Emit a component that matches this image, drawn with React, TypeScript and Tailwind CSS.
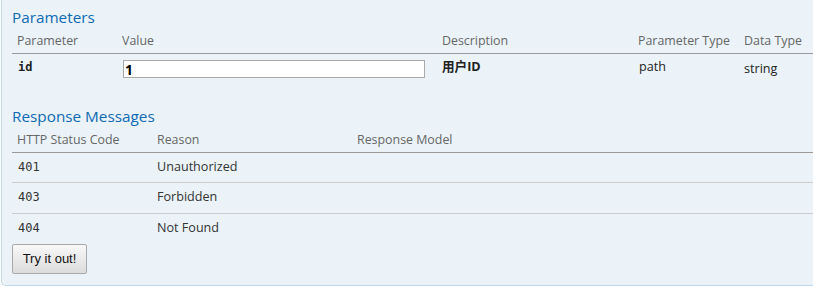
import React from 'react';

const sans = "font-['Open_Sans','Noto_Sans_CJK_SC',sans-serif]";
const mono = "font-['DejaVu_Sans_Mono',monospace]";

const responses = [
  { code: '401', reason: 'Unauthorized', h: 'h-[30px]' },
  { code: '403', reason: 'Forbidden', h: 'h-[31px]' },
  { code: '404', reason: 'Not Found', h: 'h-[30px]' }
];

export default function App() {
  return <div className={`w-[813px] h-[288px] overflow-hidden bg-white ${sans}`}>
      <div className="ml-px w-[840px] bg-[#ebf3f9] border-l border-b border-[#c3d9ec] rounded-bl-[5px] pl-[10px] pb-[11px]">
        <h4 className="pt-[5px] h-[29px] text-[15.3px] leading-[24px] text-[#0f6ab4]">
          Parameters
        </h4>
        <div className="grid grid-cols-[105px_320px_196px_106px_1fr] text-[12.4px] leading-[18px] text-[#666] border-b border-[#999]">
          <div className="pl-[5px] pt-[3px] pb-[3px]">Parameter</div>
          <div className="pl-[5px] pt-[3px]">Value</div>
          <div className="pl-[5px] pt-[3px]">Description</div>
          <div className="pl-[5px] pt-[3px]">Parameter Type</div>
          <div className="pl-[5px] pt-[3px]">Data Type</div>
        </div>
        <div className="grid grid-cols-[105px_320px_196px_106px_1fr] items-start pt-[6px] h-[30px] text-[12.6px] leading-[14px] text-[#222]">
          <div className={`pl-[6px] text-[12px] font-bold ${mono}`}>id</div>
          <div className="pl-[6px]">
            <input readOnly value="1" className="block w-[302px] h-[18px] border border-[#aaa] bg-white px-[1px] text-[14px] font-bold text-black outline-none" />
          </div>
          <div className="pl-[5px] font-bold">用户ID</div>
          <div className="pl-[6px]">path</div>
          <div className="pl-[5px] pt-[2px]">string</div>
        </div>
        <h4 className="mt-[20px] h-[24px] text-[15.3px] leading-[24px] text-[#0f6ab4]">
          Response Messages
        </h4>
        <div className="grid grid-cols-[140px_200px_1fr] text-[12.4px] leading-[18px] text-[#666] border-b border-[#999]">
          <div className="pl-[5px] pt-[3px] pb-[3px]">HTTP Status Code</div>
          <div className="pl-[5px] pt-[3px]">Reason</div>
          <div className="pl-[5px] pt-[3px]">Response Model</div>
        </div>
        {responses.map((r, i) => <div key={r.code} className={`grid grid-cols-[140px_200px_1fr] ${r.h} pt-[5px] text-[12.6px] leading-[18px] text-[#333] ${i < responses.length - 1 ? 'border-b border-[#ccc]' : ''}`}>
            <div className={`pl-[6px] text-[12px] ${mono}`}>{r.code}</div>
            <div className="pl-[5px]">{r.reason}</div>
            <div />
          </div>)}
        <button className="h-[30px] w-[75px] rounded-[2px] border border-[#a9a9a9] bg-gradient-to-b from-[#f8f8f8] to-[#dcdcdc] font-['Liberation_Sans',Arial,sans-serif] text-[13px] text-[#111]">
          Try it out!
        </button>
      </div>
    </div>;
}
